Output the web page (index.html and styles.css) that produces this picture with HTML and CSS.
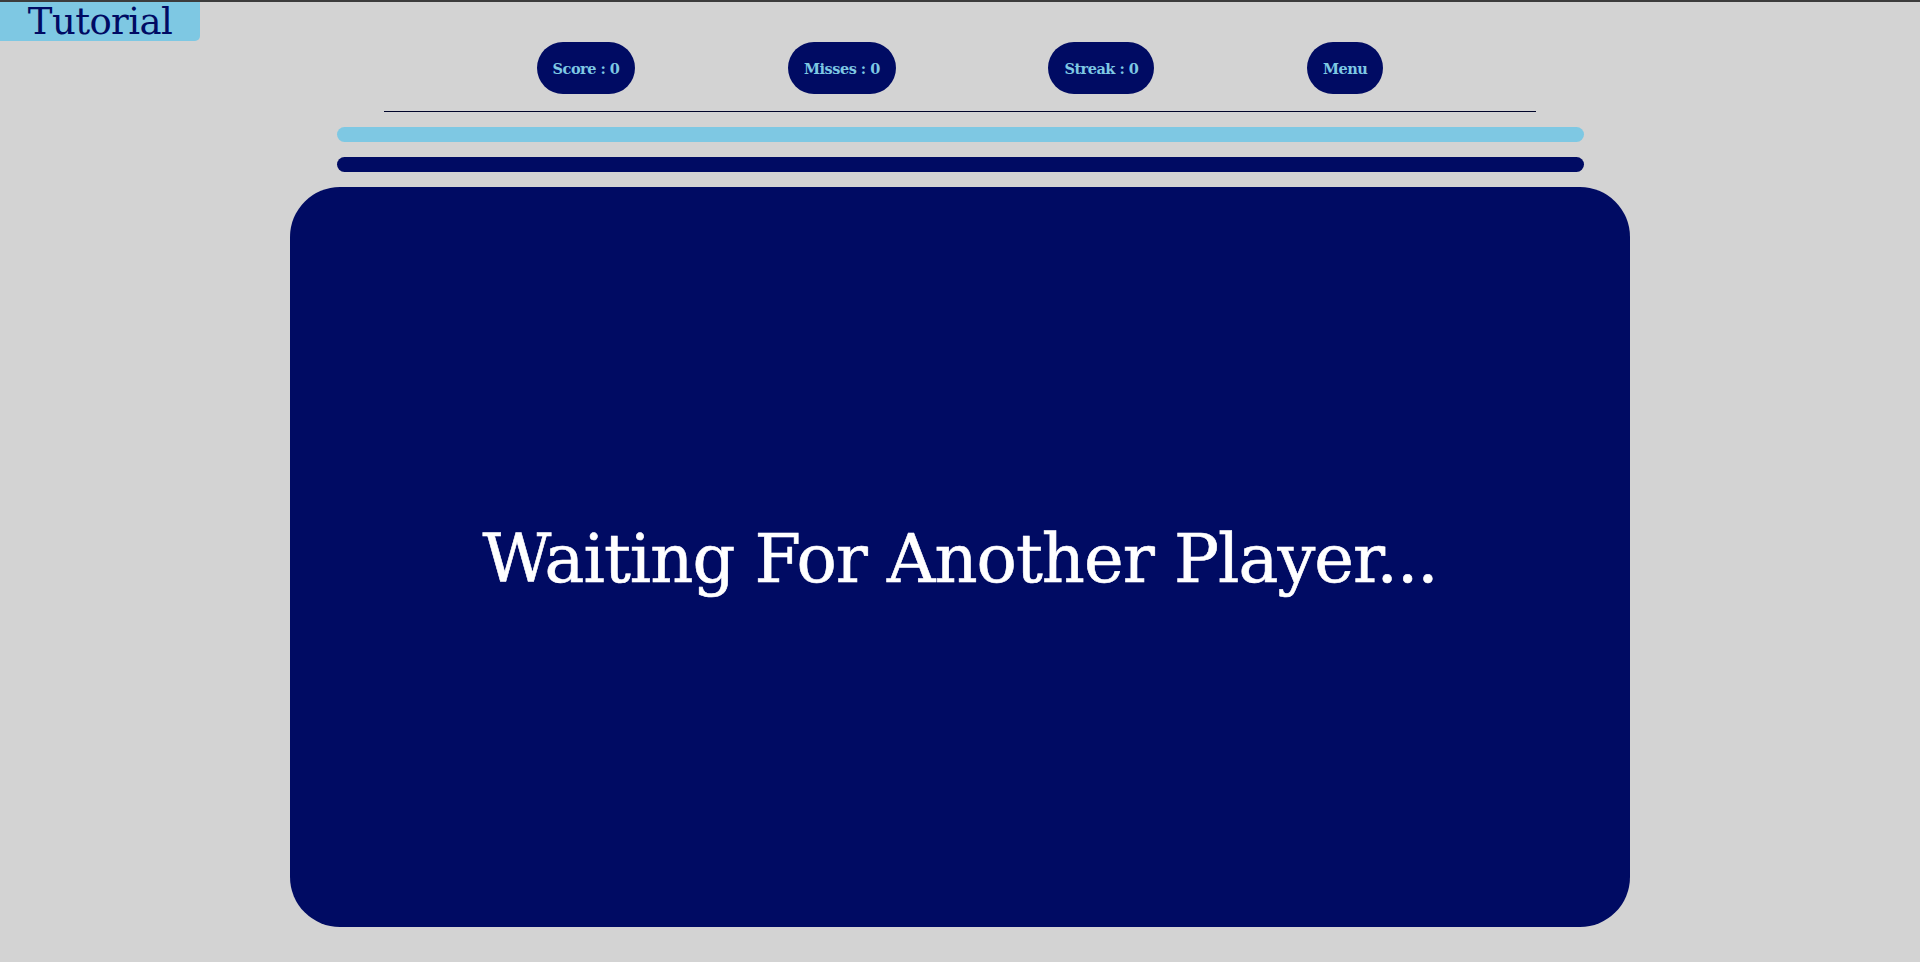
FILE: index.html
```html
<!DOCTYPE html>
<html lang="en">
<head>
<meta charset="utf-8">
<title>Tutorial</title>
<link rel="stylesheet" href="styles.css">
</head>
<body>
<div class="tutorial">Tutorial</div>
<main class="page">
  <nav class="nav">
    <div class="pill">Score : 0</div>
    <div class="pill">Misses : 0</div>
    <div class="pill">Streak : 0</div>
    <div class="pill">Menu</div>
  </nav>
  <div class="rule"></div>
  <div class="bar bar-light"></div>
  <div class="bar bar-dark"></div>
  <section class="board">
    <h1 class="waiting">Waiting For Another Player...</h1>
  </section>
</main>
</body>
</html>
```

FILE: styles.css
```css
html, body {
  margin: 0;
  padding: 0;
}
body {
  background: #d3d3d3;
  border-top: 2px solid #3c3c3c;
  font-family: "DejaVu Serif", "Liberation Serif", serif;
  height: 960px;
  overflow: hidden;
  position: relative;
}
.tutorial {
  position: absolute;
  top: 0;
  left: 0;
  width: 200px;
  height: 39px;
  background: #7ec8e3;
  color: #000b63;
  border-bottom-right-radius: 5px;
  font-size: 37px;
  line-height: 40px;
  text-align: center;
  letter-spacing: -0.6px;
}
.page {
  display: flex;
  flex-direction: column;
  align-items: center;
  padding-top: 40px;
}
.nav {
  width: 1152px;
  display: flex;
  justify-content: space-evenly;
  align-items: center;
}
.pill {
  height: 52px;
  border-radius: 26px;
  background: #000b63;
  color: #7ec8e3;
  font-weight: bold;
  font-size: 14.5px;
  display: flex;
  align-items: center;
  justify-content: center;
  padding: 0 16px;
  letter-spacing: -0.5px;
}
.rule {
  width: 1152px;
  height: 1px;
  background: #00052a;
  margin-top: 17px;
}
.bar {
  width: 1247px;
  height: 15px;
  border-radius: 8px;
  margin-top: 15px;
}
.bar-light {
  background: #7ec8e3;
}
.bar-dark {
  background: #000b63;
}
.board {
  width: 1340px;
  height: 740px;
  margin-top: 15px;
  border-radius: 50px;
  background: #000b63;
  display: flex;
  align-items: center;
  justify-content: center;
}
.waiting {
  margin: 0;
  color: #ffffff;
  font-weight: normal;
  font-size: 67px;
  letter-spacing: -1px;
  padding-top: 4px;
  -webkit-text-stroke: 0.6px #ffffff;
}
```
